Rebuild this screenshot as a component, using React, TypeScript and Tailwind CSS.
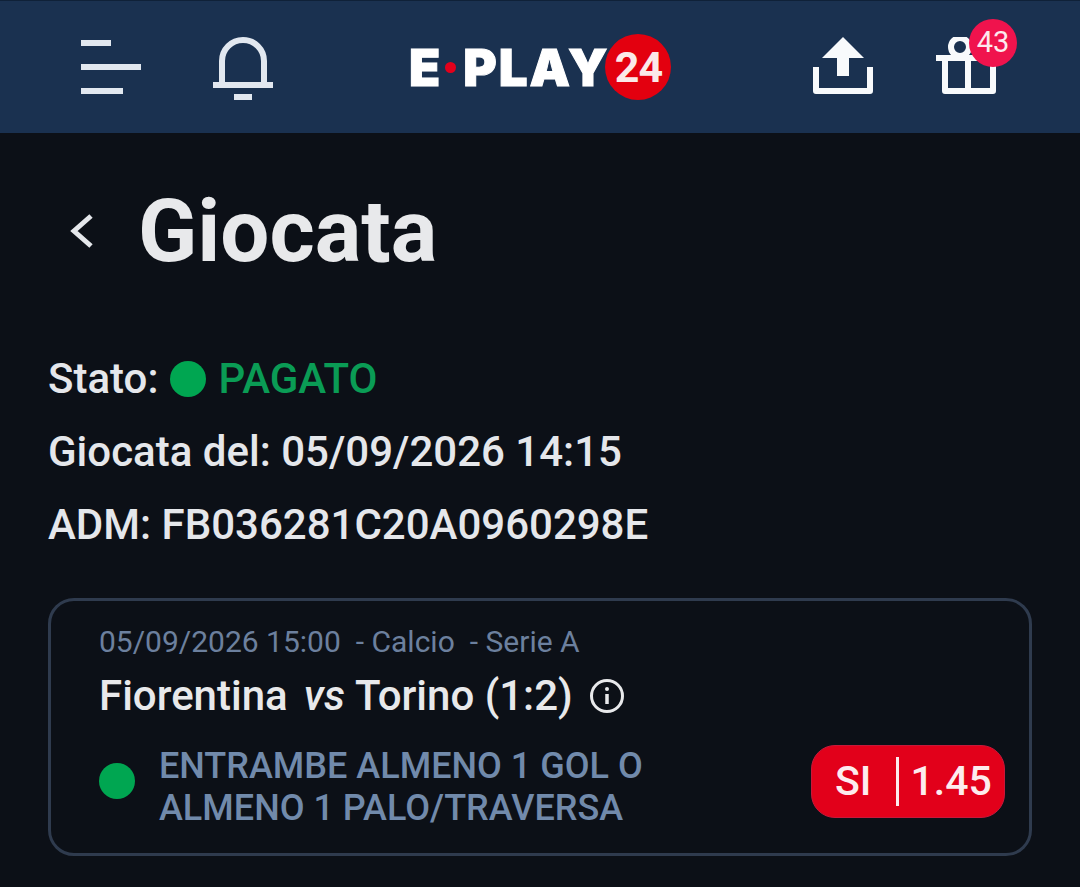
export default function App() {
  return (
    <main className="h-[887px] overflow-hidden bg-[#0c1017] text-[#e5e7eb] font-['Roboto',sans-serif]">

      {/* Header */}
      <header className="h-[133px] bg-[#1a3150] border-t border-[#0f2138] pl-[81px] pr-[84px] flex items-center">
        <svg width="60" height="54" viewBox="0 0 60 54" fill="#e2e8f0">
          <rect x="0" y="0" width="30" height="6" />
          <rect x="0" y="24" width="60" height="6" />
          <rect x="0" y="48" width="42" height="6" />
        </svg>
        <svg width="60" height="64" viewBox="0 0 60 64" fill="none" className="ml-[72px] mt-[4px]">
          <path d="M9 48V24a21 21 0 0 1 42 0V48" stroke="#e2e8f0" strokeWidth="6" />
          <rect x="0" y="45" width="60" height="6" fill="#e2e8f0" />
          <rect x="21" y="57" width="18" height="6" fill="#e2e8f0" />
        </svg>

        {/* Logo */}
        <div className="ml-[136px] flex items-center">
          <span className="flex items-center text-[51px] leading-none font-black text-white font-['Inter',sans-serif] tracking-[2px] [-webkit-text-stroke:1px_white]">
            E
            <span className="ml-[3px] mr-[7px] w-[11px] h-[11px] rounded-full bg-[#e3001b]" />
            PLAY
          </span>
          <span className="-ml-[4px] w-[66px] h-[66px] rounded-full bg-[#e3000f] flex items-center justify-center text-[43px] font-bold text-[#fbe9e9] tracking-[-1px]">
            24
          </span>
        </div>

        {/* Right icons */}
        <svg width="60" height="57" viewBox="0 0 60 57" className="ml-auto -mt-[3px]" fill="none">
          <path d="M30 0L51 21H36V39H24V21H9Z" fill="#f8fafc" />
          <path d="M3 30V54H57V30" stroke="#f8fafc" strokeWidth="6" strokeLinejoin="round" />
        </svg>
        <div className="relative ml-[63px] -mt-[3px] w-[60px] h-[57px]">
          <svg width="60" height="57" viewBox="0 0 60 57" fill="none" stroke="#f8fafc" strokeWidth="6">
            <circle cx="24" cy="10" r="9" />
            <path d="M0 21H60" />
            <path d="M9 21V54H57V21" strokeLinejoin="round" />
            <path d="M32 21V54" />
          </svg>
          <span className="absolute -top-[18px] left-[33px] w-[48px] h-[48px] rounded-full bg-[#f0134d] flex items-center justify-center text-[29px] text-[#fde8ee]">
            43
          </span>
        </div>
      </header>

      {/* Title */}
      <div className="h-[196px] pl-[68px] flex items-center">
        <svg width="26" height="36" viewBox="0 0 26 36" fill="none" stroke="#e5e7eb" strokeWidth="5">
          <path d="M23 3L6 18L23 33" />
        </svg>
        <h1 className="ml-[44px] text-[87px] leading-none font-bold text-[#e8e9eb]">Giocata</h1>
      </div>

      {/* Info */}
      <section className="pl-[48px] text-[42px] leading-[73px] font-medium mt-[13px]">
        <p className="flex items-center">
          Stato:
          <span className="ml-[12px] w-[36px] h-[36px] rounded-full bg-[#00a651]" />
          <span className="ml-[12px] text-[#0a9c55]">PAGATO</span>
        </p>
        <p>Giocata del: 05/09/2026 14:15</p>
        <p>ADM: FB036281C20A0960298E</p>
      </section>

      {/* Bet card */}
      <section className="mt-[37px] ml-[48px] w-[984px] h-[258px] border-[3px] border-[#2f3b4e] rounded-[26px] pl-[48px] pr-[24px] pt-[21px]">
        <p className="text-[30px] leading-[40px] text-[#6c809e]">
          05/09/2026 15:00
          <span className="ml-[15px]">- Calcio</span>
          <span className="ml-[15px]">- Serie A</span>
        </p>
        <div className="mt-[12px] flex items-center text-[42px] leading-[44px] font-medium text-[#e8e9eb]">
          Fiorentina
          <span className="ml-[16px] mr-[10px] italic">vs</span>
          Torino (1:2)
          <svg width="36" height="36" viewBox="0 0 36 36" fill="none" stroke="#e8e9eb" className="ml-[16px]">
            <circle cx="18" cy="18" r="15.500" strokeWidth="3" />
            <path d="M18 16V26" strokeWidth="3.500" />
            <circle cx="18" cy="11" r="2" fill="#e8e9eb" stroke="none" />
          </svg>
        </div>
        <div className="mt-[27px] flex items-start">
          <span className="mt-[18px] w-[36px] h-[36px] rounded-full bg-[#00a651]" />
          <p className="ml-[24px] text-[36px] leading-[42px] font-medium text-[#718aab]">
            ENTRAMBE ALMENO 1 GOL O<br />
            ALMENO 1 PALO/TRAVERSA
          </p>
          <div className="ml-auto w-[194px] h-[73px] rounded-[24px] border border-[#c8183a] bg-[#e2001a] flex items-center pl-[23px] text-[41px] font-medium text-[#fdecee]">
            SI
            <span className="ml-[25px] mr-[11px] w-[3px] h-[49px] bg-[#fdecee]" />
            1.45
          </div>
        </div>
      </section>
    </main>
  );
}
